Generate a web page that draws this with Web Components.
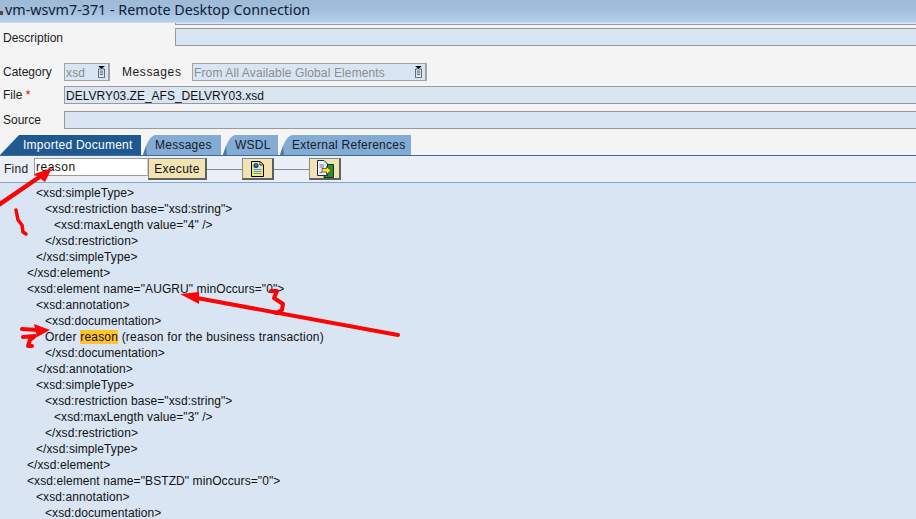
<!DOCTYPE html>
<html>
<head>
<meta charset="utf-8">
<title>Remote Desktop Connection</title>
<style>
    html, body { margin: 0; padding: 0; }
    body { width: 916px; height: 519px; overflow: hidden; background: #f4f4f4; font-family: "Liberation Sans", Arial, sans-serif; }
</style>
</head>
<body>
<sap-screen>
    <rdp-titlebar>vm-wsvm7-371 - Remote Desktop Connection</rdp-titlebar>
    <sap-row top="0" clip><sap-input left="175" stub></sap-input></sap-row>
    <sap-row top="3"><sap-label width="175" nudge="1">Description</sap-label><sap-input grow></sap-input></sap-row>
    <sap-row top="17">
        <sap-label width="64">Category</sap-label>
        <sap-input width="46" muted dropdown>xsd</sap-input>
        <sap-label width="82" pad="12" spacing=".6">Messages</sap-label>
        <sap-input width="235" muted dropdown>From All Available Global Elements</sap-input>
    </sap-row>
    <sap-row top="5"><sap-label width="64" required>File</sap-label><sap-input grow>DELVRY03.ZE_AFS_DELVRY03.xsd</sap-input></sap-row>
    <sap-row top="7"><sap-label width="64">Source</sap-label><sap-input grow></sap-input></sap-row>
    <sap-tabs>
        <sap-tab active width="141">Imported Document</sap-tab>
        <sap-tab width="78">Messages</sap-tab>
        <sap-tab width="55">WSDL</sap-tab>
        <sap-tab width="131">External References</sap-tab>
    </sap-tabs>
    <sap-toolbar>
        <sap-label width="34" pad="4" spacing=".25">Find</sap-label>
        <sap-find>reason</sap-find>
        <sap-button>Execute</sap-button>
        <sap-link></sap-link>
        <sap-button icon="doc"></sap-button>
        <sap-link></sap-link>
        <sap-button icon="export"></sap-button>
    </sap-toolbar>
    <xml-viewer>
        <xml-line indent="1">&lt;xsd:simpleType&gt;</xml-line>
        <xml-line indent="2">&lt;xsd:restriction base="xsd:string"&gt;</xml-line>
        <xml-line indent="3">&lt;xsd:maxLength value="4" /&gt;</xml-line>
        <xml-line indent="2">&lt;/xsd:restriction&gt;</xml-line>
        <xml-line indent="1">&lt;/xsd:simpleType&gt;</xml-line>
        <xml-line>&lt;/xsd:element&gt;</xml-line>
        <xml-line>&lt;xsd:element name="AUGRU" minOccurs="0"&gt;</xml-line>
        <xml-line indent="1">&lt;xsd:annotation&gt;</xml-line>
        <xml-line indent="2">&lt;xsd:documentation&gt;</xml-line>
        <xml-line indent="2" prose>Order <mark>reason</mark> (reason for the business transaction)</xml-line>
        <xml-line indent="2">&lt;/xsd:documentation&gt;</xml-line>
        <xml-line indent="1">&lt;/xsd:annotation&gt;</xml-line>
        <xml-line indent="1">&lt;xsd:simpleType&gt;</xml-line>
        <xml-line indent="2">&lt;xsd:restriction base="xsd:string"&gt;</xml-line>
        <xml-line indent="3">&lt;xsd:maxLength value="3" /&gt;</xml-line>
        <xml-line indent="2">&lt;/xsd:restriction&gt;</xml-line>
        <xml-line indent="1">&lt;/xsd:simpleType&gt;</xml-line>
        <xml-line>&lt;/xsd:element&gt;</xml-line>
        <xml-line>&lt;xsd:element name="BSTZD" minOccurs="0"&gt;</xml-line>
        <xml-line indent="1">&lt;xsd:annotation&gt;</xml-line>
        <xml-line indent="2">&lt;xsd:documentation&gt;</xml-line>
    </xml-viewer>
    <red-marks></red-marks>
</sap-screen>

<script>
const ICONS = {
    doc: `<svg width="13" height="16" viewBox="0 0 13 16">
        <path d="M.5.5H9L12.500 4V15.500H.5Z" fill="#f8e77c" stroke="#000"/>
        <path d="M9 .5V4H12.500Z" fill="#fff" stroke="#000" stroke-width=".8"/>
        <circle cx="5" cy="4.500" r="2.600" fill="#1147c4"/>
        <path d="M4 3.500h2v1.500h-2z" fill="#3fa34d"/>
        <path d="M2.500 8.500H10.500M2.500 10.500H10.500M2.500 12.500H10.500" stroke="#4f9bd0"/>
    </svg>`,
    export: `<svg width="18" height="18" viewBox="0 0 18 18">
        <path d="M8 4.500H17.500V17.500H8Z" fill="#2d8a35" stroke="#0b3d10"/>
        <path d="M1.500 .5H8L11.500 4V15.500H1.500Z" fill="#eef2fb" stroke="#1c2a50"/>
        <path d="M3.500 5H8M3.500 7H8M3.500 12.500H6" stroke="#5b79b0"/>
        <path d="M6 8.500H10.500V6.500L15 10.500L10.500 14.500V12H6Z" fill="#fbe33a" stroke="#3a3a00" stroke-width=".7"/>
    </svg>`,
    dropdown: `<svg width="9" height="12" viewBox="0 0 10 14">
        <path d="M1 0H9L5 3.500Z" fill="#000"/>
        <path d="M1.500 3.500H8.500V13.500H1.500Z" fill="#e8eef6" stroke="#3f566e"/>
        <path d="M3 6H7M3 8H7M3 10H7" stroke="#3f566e"/>
    </svg>`
};

class SapScreen extends HTMLElement {
    constructor() {
        super();
        this.attachShadow({ mode: 'open' });
        this.shadowRoot.innerHTML = `
            <style>
                :host { display: flex; flex-direction: column; position: relative; width: 916px; height: 519px; overflow: hidden; }
            </style>
            <slot></slot>
        `;
    }
}

class RdpTitlebar extends HTMLElement {
    constructor() {
        super();
        this.attachShadow({ mode: 'open' });
        this.shadowRoot.innerHTML = `
            <style>
                :host {
                    display: flex;
                    align-items: center;
                    flex: none;
                    height: 23px;
                    padding-bottom: 3px;
                    box-sizing: border-box;
                    border-bottom: 1px solid #c6daf1;
                    background: linear-gradient(#9fbad6 0, #a3bedb 45%, #b5cfeb 100%);
                    color: #0e2036;
                    font: 14.3px "Noto Sans", "Open Sans", sans-serif;
                    white-space: nowrap;
                }
                /* sliver of the window icon, cut by the left edge */
                :host::before {
                    content: "";
                    flex: none;
                    width: 3px;
                    height: 4px;
                    margin: 6px 2px 0 0;
                    background: #4b4a3e;
                }
            </style>
            <slot></slot>
        `;
    }
}

class SapRow extends HTMLElement {
    constructor() {
        super();
        this.attachShadow({ mode: 'open' });
        this.shadowRoot.innerHTML = `
            <style>
                :host { display: flex; align-items: stretch; flex: none; height: 18px; }
                :host([clip]) { height: 2px; }
            </style>
            <slot></slot>
        `;
    }

    connectedCallback() {
        this.style.marginTop = (this.getAttribute('top') || 0) + 'px';
    }
}

class SapLabel extends HTMLElement {
    constructor() {
        super();
        this.attachShadow({ mode: 'open' });
    }

    connectedCallback() {
        const star = this.hasAttribute('required') ? '<span> *</span>' : '';
        const width = this.getAttribute('width') || 60;
        const pad = this.getAttribute('pad') || 3;
        const spacing = this.getAttribute('spacing') || 0;
        const nudge = this.getAttribute('nudge') || 0;
        this.shadowRoot.innerHTML = `
            <style>
                :host {
                    display: flex;
                    align-items: center;
                    flex: none;
                    box-sizing: border-box;
                    width: ${width}px;
                    padding-left: ${pad}px;
                    padding-top: ${nudge}px;
                    font-size: 12px;
                    letter-spacing: ${spacing}px;
                    color: #1b1b1b;
                    white-space: nowrap;
                }
                span { color: #e00000; }
            </style>
            <div><slot></slot>${star}</div>
        `;
    }
}

class SapInput extends HTMLElement {
    constructor() {
        super();
        this.attachShadow({ mode: 'open' });
    }

    connectedCallback() {
        const icon = this.hasAttribute('dropdown') ? ICONS.dropdown : '';
        const left = this.getAttribute('left');
        const width = this.getAttribute('width');
        this.shadowRoot.innerHTML = `
            <style>
                :host {
                    display: flex;
                    align-items: center;
                    justify-content: space-between;
                    box-sizing: border-box;
                    flex: ${this.hasAttribute('grow') || left ? '1' : 'none'};
                    ${width ? `width: ${width}px;` : ''}
                    ${left ? `margin-left: ${left}px;` : ''}
                    border: 1px solid #9a9a9a;
                    border-right: none;
                    padding: 0 2px 0 1px;
                    background: #d9e5f3;
                    font-size: 12px;
                    color: #111;
                    white-space: nowrap;
                }
                :host([stub]) { border-top: none; height: 2px; }
                :host([muted]) { border: 2px solid #a3a3a3; border-width: 1px 2px 1px 1px; color: #8d8d8d; letter-spacing: .13px; }
                span { padding-top: 1px; }
                svg { display: block; }
            </style>
            <span><slot></slot></span>${icon}
        `;
    }
}

class SapTabs extends HTMLElement {
    constructor() {
        super();
        this.attachShadow({ mode: 'open' });
        this.shadowRoot.innerHTML = `
            <style>
                :host { display: flex; align-items: stretch; gap: 2px; flex: none; height: 20px; margin-top: 6px; }
            </style>
            <slot></slot>
        `;
    }
}

class SapTab extends HTMLElement {
    constructor() {
        super();
        this.attachShadow({ mode: 'open' });
    }

    connectedCallback() {
        const active = this.hasAttribute('active');
        const width = +this.getAttribute('width');
        const shape = active
            ? `<path d="M0 20L19 0H${width}V20Z" fill="#20598f"/>`
            : `<path d="M0 20C3 10 6 2 12 0H${width}V20Z" fill="#84abd4"/><path d="M0 20L3 11L4 20Z" fill="#4f7aa6"/>`;
        this.shadowRoot.innerHTML = `
            <style>
                :host {
                    display: block;
                    position: relative;
                    flex: none;
                    width: ${width}px;
                    box-sizing: border-box;
                    padding: 3px 0 0 ${active ? 23 : 12}px;
                    font-size: 12px;
                    line-height: 15px;
                    letter-spacing: .25px;
                    white-space: nowrap;
                    color: ${active ? '#fff' : '#10202f'};
                }
                svg { position: absolute; left: 0; top: 0; }
                span { position: relative; }
            </style>
            <svg width="${width}" height="20" viewBox="0 0 ${width} 20">${shape}</svg>
            <span><slot></slot></span>
        `;
    }
}

class SapToolbar extends HTMLElement {
    constructor() {
        super();
        this.attachShadow({ mode: 'open' });
        this.shadowRoot.innerHTML = `
            <style>
                :host {
                    display: flex;
                    align-items: flex-start;
                    flex: none;
                    height: 28px;
                    box-sizing: border-box;
                    padding-top: 2px;
                    border-top: 1px solid #3f6a96;
                    border-bottom: 1px solid #86a3c6;
                    background: #e9eef7;
                }
                ::slotted(sap-label) { height: 22px; }
            </style>
            <slot></slot>
        `;
    }
}

class SapFind extends HTMLElement {
    constructor() {
        super();
        this.attachShadow({ mode: 'open' });
        this.shadowRoot.innerHTML = `
            <style>
                :host {
                    display: block;
                    flex: none;
                    box-sizing: border-box;
                    width: 114px;
                    height: 18px;
                    padding: 1px 0 0 1px;
                    border: 1px solid #9a9a9a;
                    border-right-color: #c8c8c8;
                    background: #fff;
                    font-size: 12px;
                    line-height: 15px;
                    letter-spacing: .5px;
                    color: #111;
                }
            </style>
            <slot></slot>
        `;
    }
}

class SapButton extends HTMLElement {
    constructor() {
        super();
        this.attachShadow({ mode: 'open' });
    }

    connectedCallback() {
        const icon = ICONS[this.getAttribute('icon')] || '';
        this.shadowRoot.innerHTML = `
            <style>
                :host {
                    display: flex;
                    align-items: center;
                    justify-content: center;
                    flex: none;
                    box-sizing: border-box;
                    height: 22px;
                    width: ${icon ? 32 : 59}px;
                    padding-top: 1px;
                    border: 1px solid #c9c9c9;
                    border-right: 2px solid #5f5f5f;
                    border-bottom: 2px solid #5f5f5f;
                    border-top-color: #8a8a8a;
                    border-left-color: #8a8a8a;
                    background: #f2e3b3;
                    font-size: 12px;
                    letter-spacing: .3px;
                    color: #111;
                }
                svg { display: block; }
            </style>
            ${icon}<slot></slot>
        `;
    }
}

class SapLink extends HTMLElement {
    constructor() {
        super();
        this.attachShadow({ mode: 'open' });
        this.shadowRoot.innerHTML = `
            <style>
                :host { display: block; flex: none; width: 35px; height: 1px; margin-top: 11px; background: #8b8b8b; }
            </style>
        `;
    }
}

class XmlViewer extends HTMLElement {
    constructor() {
        super();
        this.attachShadow({ mode: 'open' });
        this.shadowRoot.innerHTML = `
            <style>
                :host { display: block; flex: 1; min-height: 0; padding-top: 2px; background: #d9e5f3; font-size: 12px; color: #111; }
            </style>
            <slot></slot>
        `;
    }
}

class XmlLine extends HTMLElement {
    constructor() {
        super();
        this.attachShadow({ mode: 'open' });
    }

    connectedCallback() {
        const indent = parseInt(this.getAttribute('indent')) || 0;
        this.shadowRoot.innerHTML = `
            <style>
                :host { display: block; height: 16px; line-height: 16px; padding-left: ${27 + indent * 9}px; white-space: nowrap; letter-spacing: .09px; }
                :host([prose]) { letter-spacing: .2px; }
                ::slotted(mark) { background: #fec42f; color: #111; }
            </style>
            <slot></slot>
        `;
    }
}

// marker annotations drawn over the screenshot
class RedMarks extends HTMLElement {
    constructor() {
        super();
        this.attachShadow({ mode: 'open' });
        this.shadowRoot.innerHTML = `
            <style>
                :host { position: absolute; left: 0; top: 0; width: 916px; height: 519px; pointer-events: none; }
                svg { display: block; }
                .s { fill: none; stroke: #fa0505; stroke-linecap: round; stroke-linejoin: round; }
                .h { fill: #fa0505; }
            </style>
            <svg width="916" height="519" viewBox="0 0 916 519">
                <path class="s" stroke-width="4.500" d="M-3 206L38 178"/>
                <path class="h" d="M52 168L34 174L45 182Z"/>
                <path class="s" stroke-width="3.500" d="M16 210L18 220L22 225L23 232L26 234"/>
                <path class="s" stroke-width="4" d="M398 335L197 298"/>
                <path class="h" d="M180 294L199 292L199 304Z"/>
                <path class="s" stroke-width="4" d="M271 291L277 291L274 298L283 304L282 310L276 313"/>
                <path class="s" stroke-width="4" d="M22 329L38 330"/>
                <path class="h" d="M50 330L34 324L37 337Z"/>
                <path class="s" stroke-width="4" d="M23 337L35 336L30 340L28 346L32 346"/>
            </svg>
        `;
    }
}

customElements.define('sap-screen', SapScreen);
customElements.define('rdp-titlebar', RdpTitlebar);
customElements.define('sap-row', SapRow);
customElements.define('sap-label', SapLabel);
customElements.define('sap-input', SapInput);
customElements.define('sap-tabs', SapTabs);
customElements.define('sap-tab', SapTab);
customElements.define('sap-toolbar', SapToolbar);
customElements.define('sap-find', SapFind);
customElements.define('sap-button', SapButton);
customElements.define('sap-link', SapLink);
customElements.define('xml-viewer', XmlViewer);
customElements.define('xml-line', XmlLine);
customElements.define('red-marks', RedMarks);
</script>
</body>
</html>
